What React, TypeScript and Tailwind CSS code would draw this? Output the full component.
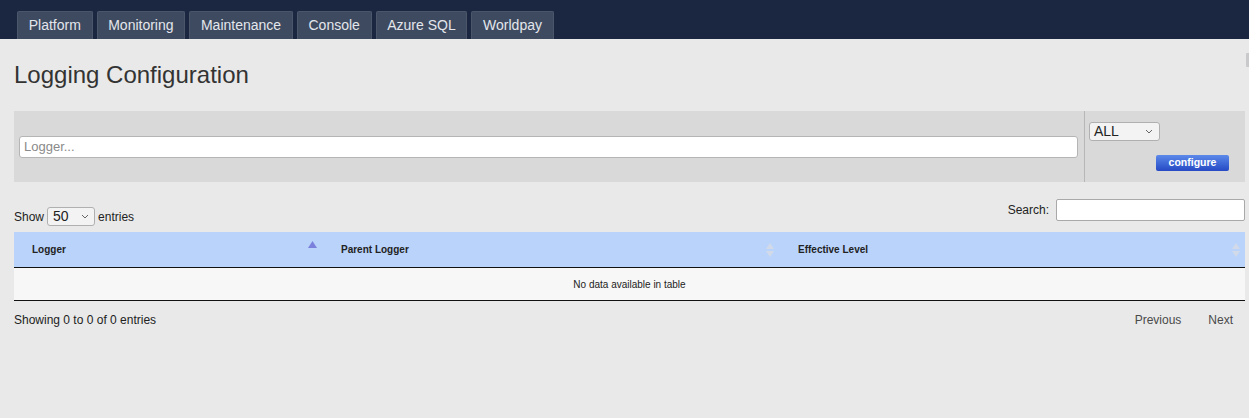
import React from "react";

const tabs = ["Platform", "Monitoring", "Maintenance", "Console", "Azure SQL", "Worldpay"];

function Chevron() {
  return (
    <svg width="8" height="5" viewBox="0 0 8 5" className="shrink-0">
      <path d="M1 1 L4 4 L7 1" fill="none" stroke="#666" strokeWidth="1" />
    </svg>
  );
}

function SortBoth() {
  return (
    <svg width="8" height="14" viewBox="0 0 8 14">
      <path d="M4 0 L8 6 L0 6 Z" fill="#d2dae9" />
      <path d="M0 8 L8 8 L4 14 Z" fill="#d2dae9" />
    </svg>
  );
}

function SortAsc() {
  return (
    <svg width="9" height="7" viewBox="0 0 9 7">
      <path d="M4.5 0 L9 7 L0 7 Z" fill="#7b80dc" />
    </svg>
  );
}

export default function App() {
  return (
    <div
      className="relative w-[1249px] h-[418px] bg-[#e9e9e9] overflow-hidden"
      style={{ fontFamily: '"Liberation Sans", Arial, sans-serif' }}
    >
      <div className="h-[39px] bg-[#1b2640] flex items-end pl-[17px] gap-[4px]">
        {tabs.map((t) => (
          <div
            key={t}
            className="h-[28px] px-[10.7px] flex items-center bg-[#3e4a60] border border-b-0 border-[#4b566b] rounded-t-[2px] text-[14px] text-[#e3e6ec]"
          >
            {t}
          </div>
        ))}
      </div>

      <div className="pl-[14px] pr-[4px]">
        <h1 className="mt-[22px] text-[24px] leading-[28px] text-[#333]">Logging Configuration</h1>

        <div className="mt-[22px] h-[71px] bg-[#d9d9d9] flex">
          <div className="flex-1 flex items-center pl-[5px] pr-[6px] border-r border-[#b7b7b7]">
            <div className="w-full h-[22px] bg-white border border-[#b5b5b5] rounded-[3px] flex items-center px-[4px] text-[13px] text-[#8a8a8a]">
              Logger...
            </div>
          </div>
          <div className="w-[160px] flex flex-col pl-[4px] pr-[16px] pt-[11px]">
            <div className="w-[71px] h-[19px] bg-[#f3f3f3] border border-[#b0b0b0] rounded-[3px] flex items-center justify-between pl-[4px] pr-[6px] text-[14px] text-[#222]">
              <span>ALL</span>
              <Chevron />
            </div>
            <div className="mt-[14px] self-end w-[73px] h-[16px] rounded-[2px] bg-gradient-to-b from-[#5d89ea] to-[#2648c4] flex items-center justify-center text-[10.5px] font-bold text-white">
              configure
            </div>
          </div>
        </div>

        <div className="mt-[17px] flex justify-between">
          <div className="pt-[8px] flex items-center gap-[3px] text-[12px] text-[#222]">
            <span>Show</span>
            <div className="w-[48px] h-[19px] bg-[#f3f3f3] border border-[#b0b0b0] rounded-[3px] flex items-center justify-between pl-[5px] pr-[5px] text-[14px] text-[#222]">
              <span>50</span>
              <Chevron />
            </div>
            <span>entries</span>
          </div>
          <div className="flex items-center gap-[7px] text-[12px] text-[#222] h-[22px]">
            <span>Search:</span>
            <div className="w-[189px] h-[22px] bg-white border border-[#a9a9a9] rounded-[2px]" />
          </div>
        </div>

        <div className="mt-[6px]">
          <div className="grid grid-cols-[309px_457px_1fr] h-[36px] bg-[#b9d3fb] border-b border-[#111] text-[10px] font-bold text-[#222]">
            <div className="flex items-center justify-between pl-[18px] pr-[6px]">
              <span>Logger</span>
              <div className="-mt-[10px]"><SortAsc /></div>
            </div>
            <div className="flex items-center justify-between pl-[18px] pr-[6px]">
              <span>Parent Logger</span>
              <SortBoth />
            </div>
            <div className="flex items-center justify-between pl-[18px] pr-[5px]">
              <span>Effective Level</span>
              <SortBoth />
            </div>
          </div>
          <div className="h-[33px] bg-[#f7f7f7] border-b border-[#111] flex items-center justify-center text-[10px] text-[#222]">
            No data available in table
          </div>
        </div>

        <div className="mt-[10px] flex justify-between text-[12px]">
          <span className="text-[#222]">Showing 0 to 0 of 0 entries</span>
          <div className="flex gap-[27px] pr-[12px] text-[#4a4a4a]">
            <span>Previous</span>
            <span>Next</span>
          </div>
        </div>
      </div>

      <div className="absolute right-0 top-[53px] w-[3px] h-[14px] bg-[#c9c9cc] rounded-l-[1px]" />
    </div>
  );
}
